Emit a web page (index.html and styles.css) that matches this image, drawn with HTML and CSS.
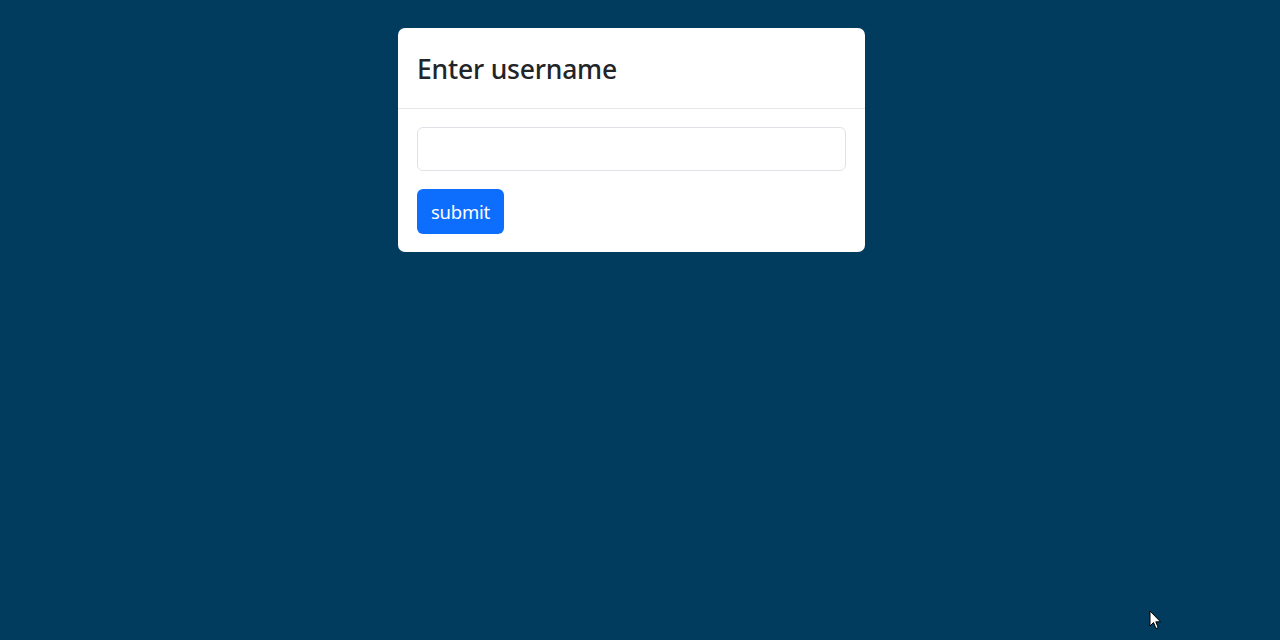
FILE: index.html
```html
<!DOCTYPE html>
<html lang="en">
<head>
    <meta charset="UTF-8">
    <meta name="viewport" content="width=device-width, initial-scale=1.0">
    <title>Enter username</title>
    <link rel="stylesheet" href="styles.css">
</head>
<body>
    <div class="page">
        <div class="card">
            <div class="card-header">
                <h3>Enter username</h3>
            </div>
            <form class="card-body">
                <input type="text" class="form-control">
                <div>
                    <button type="submit" class="btn">submit</button>
                </div>
            </form>
        </div>
    </div>
    <!-- mouse pointer from the screenshot -->
    <svg class="cursor" width="13" height="20" viewBox="0 0 13 20">
        <path d="M1 1 L1 16 L4.5 12.5 L7 18.5 L9.2 17.6 L6.8 11.8 L11.5 11.8 Z" fill="#fff" stroke="#000" stroke-width="1"/>
    </svg>
</body>
</html>
```

FILE: styles.css
```css
body {
    margin: 0;
    padding: 0;
    background-color: #013b5d;
    font-family: "Noto Sans", "Open Sans", Arial, sans-serif;
    color: #212529;
    height: 640px;
    overflow: hidden;
}
.page {
    display: flex;
    justify-content: center;
    padding-top: 28px;
    padding-right: 17px;
}
.card {
    width: 467px;
    background-color: #fff;
    border-radius: 7px;
    overflow: hidden;
}
.card-header {
    height: 81px;
    box-sizing: border-box;
    border-bottom: 1px solid #e5e7ea;
    display: flex;
    align-items: center;
    padding: 3px 19px 0 19px;
}
.card-header h3 {
    margin: 0;
    font-size: 26.5px;
    font-weight: 500;
    letter-spacing: -0.2px;
    line-height: 1.2;
}
.card-body {
    display: flex;
    flex-direction: column;
    gap: 18px;
    padding: 18px 19px 18px 19px;
}
.form-control {
    display: block;
    width: 100%;
    height: 44px;
    box-sizing: border-box;
    margin: 0;
    border: 1px solid #dee2e6;
    border-radius: 6px;
    font-size: 18px;
    padding: 6px 14px;
    outline: none;
}
.btn {
    height: 45px;
    width: 87px;
    background-color: #0d6efd;
    color: #fff;
    border: none;
    border-radius: 6px;
    font-family: inherit;
    font-size: 18.5px;
    letter-spacing: -0.2px;
    padding: 0;
    cursor: pointer;
}
.cursor {
    position: absolute;
    left: 1149px;
    top: 610px;
}
```
